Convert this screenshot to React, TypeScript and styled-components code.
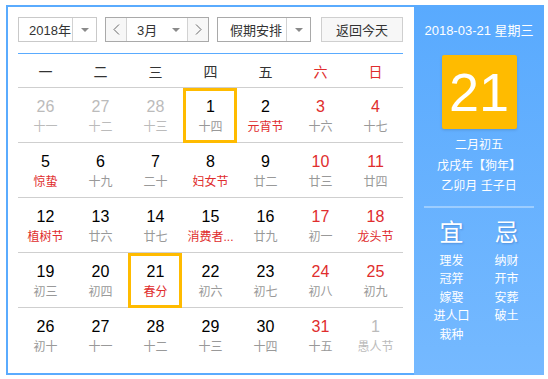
import styled, { createGlobalStyle } from 'styled-components';

const GlobalStyle = createGlobalStyle`
  body {
    margin: 0;
    background: #fff;
    font-family: "Liberation Sans", "Noto Sans CJK SC", sans-serif;
  }
`;

const BLUE = '#5aabfe';
const RED = '#e02d2d';

const Widget = styled.div`
  display: flex;
  margin: 5px 0 0 6px;
  width: 538px;
  height: 370px;
`;

const Main = styled.div`
  width: 408px;
  height: 370px;
  box-sizing: border-box;
  border: 2px solid ${BLUE};
  border-right: none;
  padding: 10px 11px 0 10px;
`;

const Toolbar = styled.div`
  display: flex;
  align-items: center;
  gap: 8px;
  height: 25px;
`;

const Select = styled.div<{ $w: number; $border?: string }>`
  display: flex;
  width: ${(p) => p.$w}px;
  height: 25px;
  box-sizing: border-box;
  border: 1px solid ${(p) => p.$border || '#c9c9c9'};
  font-size: 13px;
  color: #333;
  background: #fff;
`;

const SelectText = styled.div<{ $pad: number }>`
  flex: 1;
  display: flex;
  align-items: center;
  padding-left: ${(p) => p.$pad}px;
`;

const Caret = styled.div<{ $line?: boolean }>`
  width: 23px;
  display: flex;
  align-items: center;
  justify-content: center;
  border-left: ${(p) => (p.$line ? '1px solid #d2d2d2' : 'none')};
  &::before {
    content: '';
    border-left: 4px solid transparent;
    border-right: 4px solid transparent;
    border-top: 4px solid #8a8a8a;
  }
`;

const Group = styled.div`
  display: flex;
  height: 25px;
  box-sizing: border-box;
  border: 1px solid #a9a9a9;
`;

const ArrowBtn = styled.div<{ $side: 'l' | 'r' }>`
  width: 20px;
  display: flex;
  align-items: center;
  justify-content: center;
  background: #f7f7f7;
  border-${(p) => (p.$side === 'l' ? 'right' : 'left')}: 1px solid #d2d2d2;
`;

const MonthSel = styled.div`
  width: 60px;
  display: flex;
  font-size: 13px;
  color: #333;
`;

const TodayBtn = styled.div`
  margin-left: auto;
  width: 82px;
  height: 25px;
  box-sizing: border-box;
  border: 1px solid #cfcfcf;
  background: #f7f7f7;
  display: flex;
  align-items: center;
  justify-content: center;
  font-size: 13px;
  color: #333;
`;

const Board = styled.div`
  margin-top: 11px;
  width: 385px;
  border-top: 1px solid ${BLUE};
`;

const WeekHead = styled.div`
  display: grid;
  grid-template-columns: repeat(7, 55px);
  height: 33px;
  border-bottom: 1px solid #cfcfcf;
`;

const WeekName = styled.div<{ $red?: boolean }>`
  display: flex;
  align-items: center;
  justify-content: center;
  font-size: 14px;
  color: ${(p) => (p.$red ? RED : '#333')};
`;

const Week = styled.div<{ $last?: boolean }>`
  display: grid;
  grid-template-columns: repeat(7, 55px);
  height: 54px;
  border-bottom: ${(p) => (p.$last ? 'none' : '1px solid #cfcfcf')};
`;

const Cell = styled.div<{ $boxed?: boolean }>`
  position: relative;
  display: flex;
  flex-direction: column;
  align-items: center;
  padding-top: 10px;
  &::after {
    content: '';
    display: ${(p) => (p.$boxed ? 'block' : 'none')};
    position: absolute;
    top: 0;
    left: 0;
    width: 54px;
    height: 55px;
    box-sizing: border-box;
    border: 3px solid #ffbb00;
  }
`;

const Num = styled.div<{ $tone: 'normal' | 'red' | 'muted' }>`
  font-size: 16px;
  line-height: 18px;
  color: ${(p) => (p.$tone === 'red' ? RED : p.$tone === 'muted' ? '#bbb' : '#000')};
`;

const Lunar = styled.div<{ $tone: 'normal' | 'red' | 'muted' }>`
  margin-top: 3px;
  font-size: 12px;
  line-height: 16px;
  white-space: nowrap;
  color: ${(p) => (p.$tone === 'red' ? RED : p.$tone === 'muted' ? '#bbb' : '#999')};
`;

const Side = styled.div`
  width: 130px;
  height: 370px;
  background: linear-gradient(180deg, #59aafe 0%, #75b9ff 100%);
  color: #fff;
  display: flex;
  flex-direction: column;
  align-items: center;
  padding-top: 16px;
  box-sizing: border-box;
`;

const DateLine = styled.div`
  font-size: 13px;
  line-height: 20px;
  white-space: nowrap;
`;

const DayBox = styled.div`
  margin-top: 14px;
  width: 75px;
  height: 74px;
  background: #ffbb00;
  border-radius: 2px;
  box-shadow: 0 1px 3px rgba(0, 0, 0, 0.15);
  display: flex;
  align-items: center;
  justify-content: center;
  font-size: 54px;
  color: #fff;
`;

const LunarInfo = styled.div`
  margin-top: 6px;
  font-size: 12px;
  line-height: 20.5px;
  text-align: center;
  white-space: nowrap;
`;

const Divider = styled.div`
  margin-top: 9px;
  width: 110px;
  height: 2px;
  background: rgba(255, 255, 255, 0.35);
`;

const Advice = styled.div`
  margin-top: 10px;
  display: grid;
  grid-template-columns: repeat(2, 55px);
`;

const AdviceCol = styled.div`
  display: flex;
  flex-direction: column;
  align-items: center;
`;

const AdviceHead = styled.div`
  font-size: 24px;
  line-height: 30px;
  margin-bottom: 4px;
  text-shadow: 1px 1px 2px rgba(0, 40, 120, 0.25);
`;

const AdviceItem = styled.div`
  font-size: 12px;
  line-height: 18.5px;
  white-space: nowrap;
`;

type Tone = 'normal' | 'red' | 'muted';
interface Day {
  n: number;
  l: string;
  nt?: Tone;
  lt?: Tone;
  box?: boolean;
}

const weeks: Day[][] = [
  [
    { n: 26, l: '十一', nt: 'muted', lt: 'muted' },
    { n: 27, l: '十二', nt: 'muted', lt: 'muted' },
    { n: 28, l: '十三', nt: 'muted', lt: 'muted' },
    { n: 1, l: '十四', box: true },
    { n: 2, l: '元宵节', lt: 'red' },
    { n: 3, l: '十六', nt: 'red' },
    { n: 4, l: '十七', nt: 'red' },
  ],
  [
    { n: 5, l: '惊蛰', lt: 'red' },
    { n: 6, l: '十九' },
    { n: 7, l: '二十' },
    { n: 8, l: '妇女节', lt: 'red' },
    { n: 9, l: '廿二' },
    { n: 10, l: '廿三', nt: 'red' },
    { n: 11, l: '廿四', nt: 'red' },
  ],
  [
    { n: 12, l: '植树节', lt: 'red' },
    { n: 13, l: '廿六' },
    { n: 14, l: '廿七' },
    { n: 15, l: '消费者...', lt: 'red' },
    { n: 16, l: '廿九' },
    { n: 17, l: '初一', nt: 'red' },
    { n: 18, l: '龙头节', nt: 'red', lt: 'red' },
  ],
  [
    { n: 19, l: '初三' },
    { n: 20, l: '初四' },
    { n: 21, l: '春分', lt: 'red', box: true },
    { n: 22, l: '初六' },
    { n: 23, l: '初七' },
    { n: 24, l: '初八', nt: 'red' },
    { n: 25, l: '初九', nt: 'red' },
  ],
  [
    { n: 26, l: '初十' },
    { n: 27, l: '十一' },
    { n: 28, l: '十二' },
    { n: 29, l: '十三' },
    { n: 30, l: '十四' },
    { n: 31, l: '十五', nt: 'red' },
    { n: 1, l: '愚人节', nt: 'muted', lt: 'muted' },
  ],
];

const weekNames = ['一', '二', '三', '四', '五', '六', '日'];
const good = ['理发', '冠笄', '嫁娶', '进人口', '栽种'];
const bad = ['纳财', '开市', '安葬', '破土'];

const Chevron = ({ dir }: { dir: 'l' | 'r' }) => (
  <svg width="7" height="11" viewBox="0 0 7 11">
    <path
      d={dir === 'l' ? 'M6 0.5 L1 5.5 L6 10.5' : 'M1 0.5 L6 5.5 L1 10.5'}
      fill="none"
      stroke="#666"
      strokeWidth="1"
    />
  </svg>
);

export default function App() {
  return (
    <>
      <GlobalStyle />
      <Widget>
        <Main>
          <Toolbar>
            <Select $w={79}>
              <SelectText $pad={10}>2018年</SelectText>
              <Caret $line />
            </Select>
            <Group>
              <ArrowBtn $side="l">
                <Chevron dir="l" />
              </ArrowBtn>
              <MonthSel>
                <SelectText $pad={10}>3月</SelectText>
                <Caret />
              </MonthSel>
              <ArrowBtn $side="r">
                <Chevron dir="r" />
              </ArrowBtn>
            </Group>
            <Select $w={94} $border="#a9a9a9">
              <SelectText $pad={12}>假期安排</SelectText>
              <Caret $line />
            </Select>
            <TodayBtn>返回今天</TodayBtn>
          </Toolbar>
          <Board>
            <WeekHead>
              {weekNames.map((w, i) => (
                <WeekName key={w} $red={i >= 5}>
                  {w}
                </WeekName>
              ))}
            </WeekHead>
            {weeks.map((wk, wi) => (
              <Week key={wi} $last={wi === weeks.length - 1}>
                {wk.map((d, di) => (
                  <Cell key={di} $boxed={d.box}>
                    <Num $tone={d.nt || 'normal'}>{d.n}</Num>
                    <Lunar $tone={d.lt || (d.nt === 'muted' ? 'muted' : 'normal')}>{d.l}</Lunar>
                  </Cell>
                ))}
              </Week>
            ))}
          </Board>
        </Main>
        <Side>
          <DateLine>2018-03-21 星期三</DateLine>
          <DayBox>21</DayBox>
          <LunarInfo>
            <div>二月初五</div>
            <div>戊戌年【狗年】</div>
            <div>乙卯月 壬子日</div>
          </LunarInfo>
          <Divider />
          <Advice>
            <AdviceCol>
              <AdviceHead>宜</AdviceHead>
              {good.map((g) => (
                <AdviceItem key={g}>{g}</AdviceItem>
              ))}
            </AdviceCol>
            <AdviceCol>
              <AdviceHead>忌</AdviceHead>
              {bad.map((b) => (
                <AdviceItem key={b}>{b}</AdviceItem>
              ))}
            </AdviceCol>
          </Advice>
        </Side>
      </Widget>
    </>
  );
}
